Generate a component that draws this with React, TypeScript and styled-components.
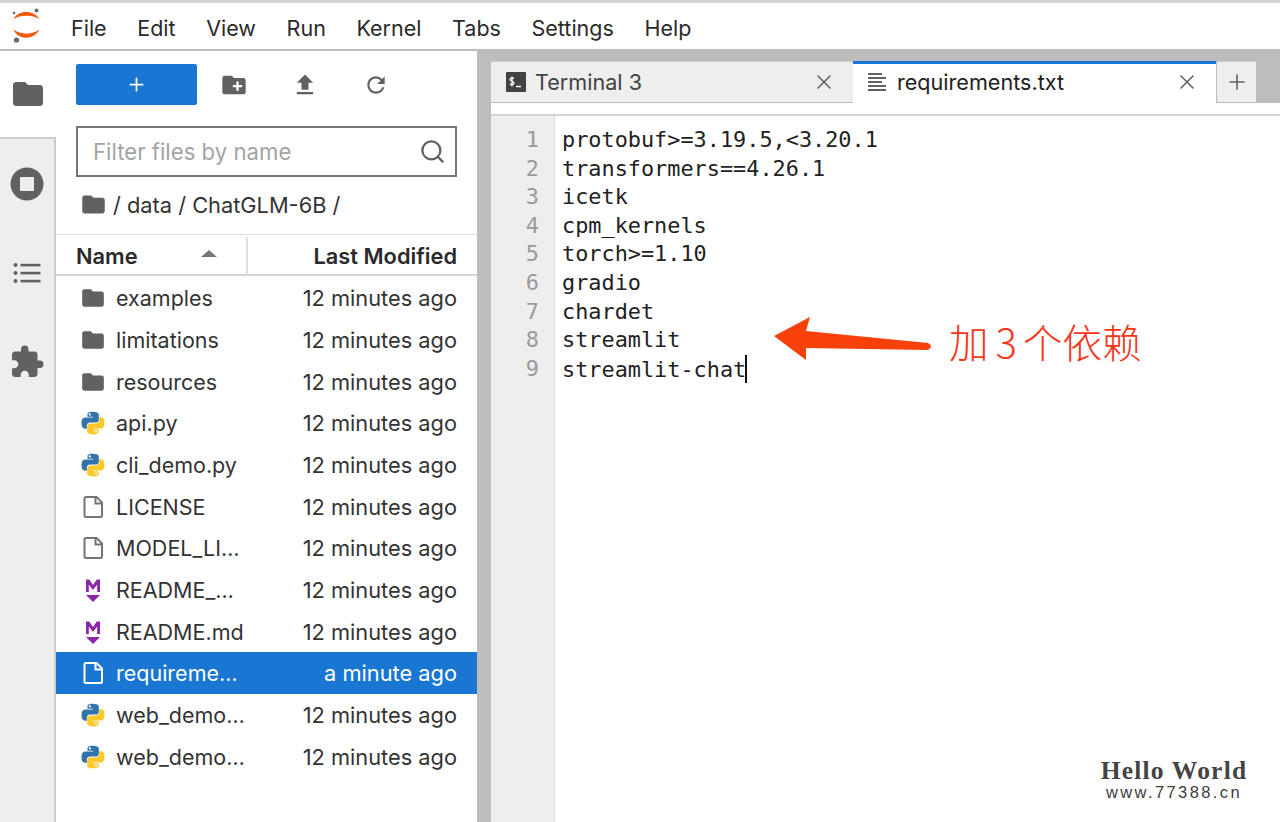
import React from 'react';
import styled, { createGlobalStyle } from 'styled-components';
import { Plus, Search, X } from 'lucide-react';
import { MdCreateNewFolder, MdExtension, MdFileUpload, MdFolder, MdRefresh } from 'react-icons/md';

const Global = createGlobalStyle`
  html, body { margin: 0; padding: 0; background: #fff; overflow: hidden; }
  body { font-family: Inter, "Liberation Sans", sans-serif; color: #212121; }
  * { box-sizing: border-box; }
`;

const Page = styled.div`
  position: relative; width: 1280px; height: 822px; display: flex; flex-direction: column;
  overflow: hidden; border-top: 3px solid #d6d6d6;
`;
const MenuBar = styled.header`
  height: 48px; flex: none; display: flex; align-items: center; background: #fff;
  border-bottom: 2px solid #bdbdbd; padding-bottom: 1px;
`;
const LogoBox = styled.div`width: 55px; display: flex; justify-content: center; padding-right: 1px;`;
const MenuList = styled.nav`display: flex; gap: 30.6px; padding: 5px 0 0 16px;`;
const MenuItem = styled.span`font-size: 21.5px; line-height: 26px; color: #2a2a2a;`;
const Body = styled.div`flex: 1; display: flex; min-height: 0;`;
const Rail = styled.aside`width: 56px; flex: none; display: flex; flex-direction: column; background: #eee;`;
const RailTab = styled.div<{ $active?: boolean; $h: number }>`
  height: ${p => p.$h}px; display: flex; align-items: center; justify-content: center; color: #616161;
  background: ${p => (p.$active ? '#fff' : 'transparent')};
  border-right: ${p => (p.$active ? 'none' : '2px solid #ccc')};
  border-bottom: ${p => (p.$active ? '2px solid #ccc' : 'none')};
`;
const RailRest = styled.div`flex: 1; border-right: 2px solid #ccc;`;
const Browser = styled.section`width: 421px; flex: none; background: #fff; display: flex; flex-direction: column;`;
const Tools = styled.div`height: 41px; margin-top: 13px; padding-left: 20px; display: flex; align-items: center; flex: none;`;
const NewButton = styled.div`
  width: 121px; height: 41px; background: #1976d2; border-radius: 2px; display: flex;
  align-items: center; justify-content: center; color: #fff; margin-right: 1px;
`;
const ToolIcon = styled.div`width: 71px; display: flex; justify-content: center; color: #616161;`;
const Filter = styled.div`
  height: 51px; margin: 21px 20px 0; border: 2px solid #757575; display: flex; align-items: center;
  justify-content: space-between; padding: 0 9px 0 15px; flex: none; color: #616161;
`;
const FilterText = styled.span`font-size: 22.2px; color: #a4a4a4;`;
const Crumbs = styled.div`
  height: 57px; flex: none; display: flex; align-items: center; gap: 6px; padding: 0 0 2px 24px;
  font-size: 21.8px; color: #333;
`;
const CrumbIcon = styled.span`display: flex; color: #616161;`;
const HeaderRow = styled.div`
  height: 42px; flex: none; display: flex; border-top: 1px solid #dedede; border-bottom: 2px solid #d4d4d4;
  font-size: 21.8px; font-weight: 600; color: #2a2a2a; padding-top: 2px;
`;
const NameHead = styled.div`
  width: 192px; display: flex; align-items: center; justify-content: space-between;
  padding: 0 29px 0 20px; border-right: 2px solid #e0e0e0;
`;
const Caret = styled.span`
  width: 0; height: 0; border-left: 8px solid transparent; border-right: 8px solid transparent;
  border-bottom: 7px solid #757575; margin-bottom: 4px;
`;
const DateHead = styled.div`flex: 1; display: flex; align-items: center; justify-content: flex-end; padding-right: 20px;`;
const Files = styled.div`padding-top: 1.5px; flex: 1;`;
const Row = styled.div<{ $sel?: boolean }>`
  height: 41.67px; display: flex; align-items: center; padding: 0 20px 0 24px; font-size: 21.8px;
  background: ${p => (p.$sel ? '#1976d2' : 'transparent')}; color: ${p => (p.$sel ? '#fff' : '#333')};
`;
const RowIcon = styled.span`width: 26px; height: 26px; flex: none; display: flex; align-items: center; justify-content: center;`;
const RowName = styled.span`
  width: 129px; margin-left: 10px; flex: none; white-space: nowrap; overflow: hidden; text-overflow: ellipsis;
  font-size: 21.5px;
`;
const RowDate = styled.span`flex: 1; text-align: right; white-space: nowrap;`;
const Splitter = styled.div`width: 14px; flex: none; background: #bdbdbd;`;
const Main = styled.main`flex: 1; display: flex; flex-direction: column; min-width: 0; background: #fff;`;
const TabBar = styled.div`height: 52px; flex: none; background: #bdbdbd; display: flex; align-items: flex-end; padding-top: 10px;`;
const Tab = styled.div<{ $active?: boolean }>`
  width: ${p => (p.$active ? '363px' : '362px')}; height: ${p => (p.$active ? '42px' : '41px')};
  align-self: flex-start; display: flex; align-items: center; padding: 0 17px ${p => (p.$active ? '3px' : '0')} 15px; gap: 9px; font-size: 21.6px;
  background: ${p => (p.$active ? '#fff' : '#eee')}; color: ${p => (p.$active ? '#212121' : '#424242')};
  border-top: ${p => (p.$active ? '3px solid #1976d2' : '1px solid #ccc')};
`;
const TabTitle = styled.span`flex: 1; white-space: nowrap;`;
const TabClose = styled.span`display: flex; color: #616161;`;
const AddTab = styled.div`
  width: 39px; height: 41px; margin-left: 1px; align-self: flex-start; background: #eee; display: flex;
  align-items: center; justify-content: center; color: #616161; border-top: 1px solid #ccc;
`;
const EditorBar = styled.div`height: 13px; flex: none; background: #fff; border-bottom: 2px solid #d4d4d4;`;
const Editor = styled.div`flex: 1; display: flex; min-height: 0;`;
const Gutter = styled.div`
  width: 64px; flex: none; background: #eee; border-right: 1px solid #ddd; padding: 10px 15px 0 0;
  text-align: right; color: #9a9a9a;
  font: 21.9px/28.6px "DejaVu Sans Mono", monospace;
`;
const Code = styled.pre`
  margin: 0; padding: 10px 0 0 7px; color: #222; font: 21.87px/28.6px "DejaVu Sans Mono", monospace;
`;
const Caretline = styled.span`
  display: inline-block; width: 2px; height: 28px; background: #111; vertical-align: -6px; margin-left: -1px;
`;
const Arrow = styled.svg`position: absolute; left: 770px; top: 312px;`;
const Note = styled.div`
  position: absolute; left: 949px; top: 313px; color: #f5361a; font-size: 39.5px; line-height: 50px;
  font-family: "Noto Sans CJK SC", sans-serif; font-weight: 300; white-space: nowrap;
`;
const Three = styled.span`font-size: 40px; margin: 0 6px 0 7px;`;
const Watermark = styled.div`
  position: absolute; left: 1094px; top: 754px; width: 160px; text-align: center; color: #3c3c3c;
`;
const WmTitle = styled.div`
  font: 700 25.5px/27px "Liberation Serif", serif; letter-spacing: 1.2px; white-space: nowrap; color: #444;
`;
const WmUrl = styled.div`font: 16.5px/16px "Liberation Sans", sans-serif; letter-spacing: 2.4px; white-space: nowrap;`;

const Logo = () => (
  <svg width="30" height="36" viewBox="0 0 30 36">
    <path d="M1.5 11 C6 1.5, 22 1.5, 27.5 11 C21 6.5, 8 6.5, 1.5 11 Z" fill="#f0590e" />
    <path d="M1.5 21.5 C6 32.500, 22 32.500, 27.500 21.500 C21 27, 8 27, 1.500 21.500 Z" fill="#f0590e" />
    <circle cx="24.5" cy="2.5" r="2" fill="#6a6a6a" />
    <circle cx="2" cy="5" r="1.3" fill="#6a6a6a" />
    <circle cx="4.5" cy="32" r="2.6" fill="#6a6a6a" />
  </svg>
);
const StopIcon = () => (
  <svg width="34" height="34" viewBox="0 0 34 34">
    <circle cx="17" cy="17" r="16.5" fill="#616161" />
    <rect x="10" y="10" width="14" height="14" rx="1" fill="#eee" />
  </svg>
);
const ListIcon = () => (
  <svg width="28" height="24" viewBox="0 0 28 24" fill="#616161">
    <circle cx="2.5" cy="4" r="2" /><circle cx="2.5" cy="12" r="2" /><circle cx="2.5" cy="20" r="2" />
    <rect x="7.5" y="2.8" width="20" height="2.6" /><rect x="7.5" y="10.8" width="20" height="2.6" /><rect x="7.5" y="18.8" width="20" height="2.6" />
  </svg>
);
const Python = () => (
  <svg width="26" height="26" viewBox="0 0 24 24">
    <path fill="#0d5c9c" d="M11.9 1.5c-5.4 0-5 2.3-5 2.3v2.4h5.1v.7H4.9S1.4 6.5 1.4 12s3.1 5.2 3.1 5.2h1.8v-2.5s-.1-3.1 3.1-3.1h5.1s2.9 0 2.9-2.9V4.4s.4-2.9-5.500-2.900zM9.100 3.100c.5 0 1 .4 1 1s-.5 1-1 1-1-.4-1-1 .5-1 1-1z" opacity=".85" />
    <path fill="#fcc92d" d="M12.1 22.5c5.4 0 5-2.3 5-2.3v-2.4H12v-.7h7.1s3.5.4 3.5-5.1-3.1-5.2-3.1-5.2h-1.8v2.5s.1 3.1-3.1 3.1H9.5s-2.9 0-2.9 2.9v4.7s-.4 2.5 5.5 2.5zm2.8-1.6c-.5 0-1-.4-1-1s.5-1 1-1 1 .4 1 1-.5 1-1 1z" />
  </svg>
);
const FileIcon = ({ color = '#757575' }: { color?: string }) => (
  <svg width="24" height="24" viewBox="0 0 24 24" fill="none" stroke={color} strokeWidth="2">
    <path d="M3.5 3.5a1.5 1.5 0 0 1 1.5-1.500h10.500l5.500 5.500v13a1.500 1.500 0 0 1-1.500 1.500H5a1.500 1.500 0 0 1-1.500-1.500z" />
    <path d="M14.500 2v6.500h6.500" />
  </svg>
);
const Markdown = () => (
  <svg width="20" height="26" viewBox="0 0 20 26" fill="#8e24aa">
    <path d="M3 15V2.500h3.200L10 8l3.800-5.500H17V15h-2.800V7.500L10 13 5.800 7.500V15z" />
    <path d="M3 18h14l-7 7z" />
  </svg>
);
const TermIcon = () => (
  <svg width="20" height="20" viewBox="0 0 20 20">
    <rect width="20" height="20" rx="1" fill="#424242" />
    <path d="M8 6.500C7 5.500 4 5.500 4 7.500s4 1.500 4 3.500-3 2-4 1M6 4.500v10M10 14.500h5" fill="none" stroke="#fff" strokeWidth="1.300" />
  </svg>
);
const TextIcon = () => (
  <svg width="20" height="20" viewBox="0 0 20 20" fill="#616161">
    <rect x="0" y="1" width="14" height="2" /><rect x="0" y="5" width="18" height="2" />
    <rect x="0" y="9" width="14" height="2" /><rect x="0" y="13" width="18" height="2" /><rect x="0" y="17" width="18" height="2" />
  </svg>
);

type Kind = 'folder' | 'py' | 'file' | 'md';
const files: { n: string; k: Kind; d?: string; sel?: boolean }[] = [
  { n: 'examples', k: 'folder' },
  { n: 'limitations', k: 'folder' },
  { n: 'resources', k: 'folder' },
  { n: 'api.py', k: 'py' },
  { n: 'cli_demo.py', k: 'py' },
  { n: 'LICENSE', k: 'file' },
  { n: 'MODEL_LICENSE', k: 'file' },
  { n: 'README_en.md', k: 'md' },
  { n: 'README.md', k: 'md' },
  { n: 'requirements.txt', k: 'file', d: 'a minute ago', sel: true },
  { n: 'web_demo_old.py', k: 'py' },
  { n: 'web_demo2.py', k: 'py' },
];
const code = ['protobuf>=3.19.5,<3.20.1', 'transformers==4.26.1', 'icetk', 'cpm_kernels', 'torch>=1.10', 'gradio', 'chardet', 'streamlit', 'streamlit-chat'];

export default function App() {
  return (
    <Page>
      <Global />
      <MenuBar>
        <LogoBox><Logo /></LogoBox>
        <MenuList>
          {['File', 'Edit', 'View', 'Run', 'Kernel', 'Tabs', 'Settings', 'Help'].map(m => <MenuItem key={m}>{m}</MenuItem>)}
        </MenuList>
      </MenuBar>
      <Body>
        <Rail>
          <RailTab $active $h={88}><MdFolder size={36} /></RailTab>
          <RailTab $h={89}><StopIcon /></RailTab>
          <RailTab $h={89}><ListIcon /></RailTab>
          <RailTab $h={89}><MdExtension size={36} /></RailTab>
          <RailRest />
        </Rail>
        <Browser>
          <Tools>
            <NewButton><Plus size={21} strokeWidth={2} /></NewButton>
            <ToolIcon><MdCreateNewFolder size={28} /></ToolIcon>
            <ToolIcon><MdFileUpload size={28} /></ToolIcon>
            <ToolIcon><MdRefresh size={26} /></ToolIcon>
          </Tools>
          <Filter>
            <FilterText>Filter files by name</FilterText>
            <Search size={27} strokeWidth={2} />
          </Filter>
          <Crumbs>
            <CrumbIcon><MdFolder size={27} /></CrumbIcon>
            <span>/ data / ChatGLM-6B /</span>
          </Crumbs>
          <HeaderRow>
            <NameHead><span>Name</span><Caret /></NameHead>
            <DateHead>Last Modified</DateHead>
          </HeaderRow>
          <Files>
            {files.map(f => (
              <Row key={f.n} $sel={f.sel}>
                <RowIcon>
                  {f.k === 'folder' && <MdFolder size={28} color="#616161" />}
                  {f.k === 'py' && <Python />}
                  {f.k === 'file' && <FileIcon color={f.sel ? '#fff' : '#757575'} />}
                  {f.k === 'md' && <Markdown />}
                </RowIcon>
                <RowName>{f.n}</RowName>
                <RowDate>{f.d ?? '12 minutes ago'}</RowDate>
              </Row>
            ))}
          </Files>
        </Browser>
        <Splitter />
        <Main>
          <TabBar>
            <Tab>
              <TermIcon />
              <TabTitle>Terminal 3</TabTitle>
              <TabClose><X size={24} strokeWidth={1.6} /></TabClose>
            </Tab>
            <Tab $active>
              <TextIcon />
              <TabTitle>requirements.txt</TabTitle>
              <TabClose><X size={24} strokeWidth={1.6} /></TabClose>
            </Tab>
            <AddTab><Plus size={24} strokeWidth={1.6} /></AddTab>
          </TabBar>
          <EditorBar />
          <Editor>
            <Gutter>{code.map((_, i) => <div key={i}>{i + 1}</div>)}</Gutter>
            <Code>{code.join('\n')}<Caretline /></Code>
          </Editor>
        </Main>
      </Body>
      <Arrow width="170" height="50" viewBox="0 0 170 50">
        <path d="M4 21 L40 2 L36 16 L158 28 Q164 31 158 35 L36 33 L36 45 Z" fill="#f8410a" />
      </Arrow>
      <Note>加<Three>3</Three>个依赖</Note>
      <Watermark>
        <WmTitle>Hello World</WmTitle>
        <WmUrl>www.77388.cn</WmUrl>
      </Watermark>
    </Page>
  );
}
